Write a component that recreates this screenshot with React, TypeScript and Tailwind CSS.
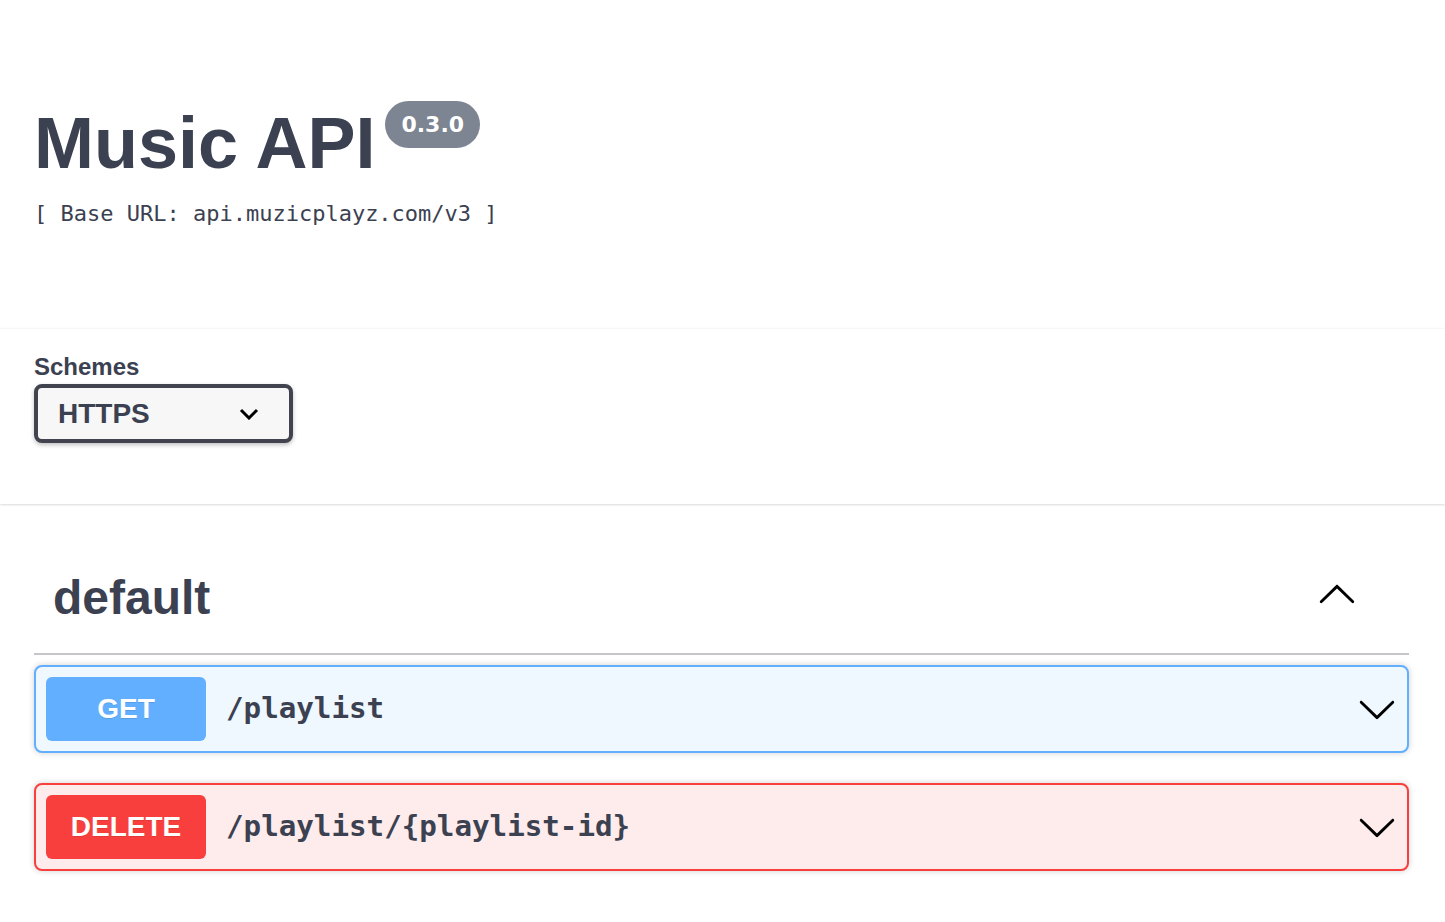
const ARROW_PATH =
  'M17.418 6.109c.272-.268.709-.268.979 0s.271.701 0 .969l-7.908 7.83c-.27.268-.707.268-.979 0l-7.908-7.83c-.27-.268-.27-.701 0-.969.271-.268.709-.268.979 0L10 13.25l7.418-7.141z';

function Arrow({ up = false }: { up?: boolean }) {
  return (
    <svg
      viewBox="0 0 20 20"
      width={40}
      height={40}
      className={up ? 'shrink-0 rotate-180' : 'shrink-0'}
      fill="#000"
    >
      <path d={ARROW_PATH} />
    </svg>
  );
}

type Op = { method: string; path: string; kind: 'get' | 'delete' };

const OPS: Op[] = [
  { method: 'GET', path: '/playlist', kind: 'get' },
  { method: 'DELETE', path: '/playlist/{playlist-id}', kind: 'delete' },
];

function OpBlock({ op }: { op: Op }) {
  const isGet = op.kind === 'get';
  return (
    <div
      className={[
        'mb-[30px] flex h-[88px] items-center rounded-[8px] border-2 p-[10px] shadow-[0_0_6px_rgba(0,0,0,0.19)]',
        isGet ? 'border-[#61affe] bg-[#eff7ff]' : 'border-[#f93e3e] bg-[#feecec]',
      ].join(' ')}
    >
      <span
        className={[
          "flex h-[64px] w-[160px] shrink-0 items-center justify-center rounded-[6px] font-['Liberation_Sans',Arial,sans-serif] text-[28px] font-bold text-white [text-shadow:0_1px_0_rgba(0,0,0,0.1)]",
          isGet ? 'bg-[#61affe]' : 'bg-[#f93e3e]',
        ].join(' ')}
      >
        {op.method}
      </span>
      <span className="ml-[20px] flex-1 font-['DejaVu_Sans_Mono',monospace] text-[29.2px] font-bold text-[#3b4151]">
        {op.path}
      </span>
      <Arrow />
    </div>
  );
}

export default function App() {
  return (
    <div className="min-h-screen bg-white font-['Liberation_Sans',Arial,sans-serif] text-[#3b4151]">
      {/* Info */}
      <div className="pl-[34px] pr-[36px] pt-[101px]">
        <div className="flex items-start">
          <h2 className="mt-[6px] text-[72px] font-bold leading-[72px]">Music API</h2>
          <span className="ml-[10px] flex h-[47px] items-center rounded-full bg-[#7d8492] px-[16px] font-['DejaVu_Sans',sans-serif] text-[22px] font-bold text-white">
            0.3.0
          </span>
        </div>
        <div className="mt-[20px] font-['DejaVu_Sans_Mono',monospace] text-[22px] leading-[30px]">
          [ Base URL: api.muzicplayz.com/v3 ]
        </div>
      </div>

      {/* Schemes */}
      <div className="mt-[99px] border-t border-[#f7f7f7] bg-white pb-[61px] pl-[34px] pt-[24px] shadow-[0_1px_2px_0_rgba(0,0,0,0.15)]">
        <div className="text-[24px] font-bold leading-[28px]">Schemes</div>
        <div className="mt-[3px] flex h-[59px] w-[259px] items-center justify-between rounded-[8px] border-4 border-[#41444e] bg-[#f7f7f7] pl-[20px] pr-[30px] shadow-[0_2px_4px_0_rgba(0,0,0,0.25)]">
          <span className="text-[28px] font-bold">HTTPS</span>
          <svg width={20} height={12} viewBox="0 0 20 12" fill="none" stroke="#000" strokeWidth={3}>
            <polyline points="2,2 10,10 18,2" />
          </svg>
        </div>
      </div>

      {/* Operations */}
      <div className="mt-[51px] pl-[34px] pr-[36px]">
        <div className="flex h-[100px] items-center justify-between border-b-2 border-[#c4c6cb] pb-[18px] pl-[19px] pr-[52px]">
          <h3 className="mt-[6px] text-[48px] font-bold leading-[48px]">default</h3>
          <Arrow up />
        </div>
        <div className="mt-[10px]">
          {OPS.map((op) => (
            <OpBlock key={op.path} op={op} />
          ))}
        </div>
      </div>
    </div>
  );
}
